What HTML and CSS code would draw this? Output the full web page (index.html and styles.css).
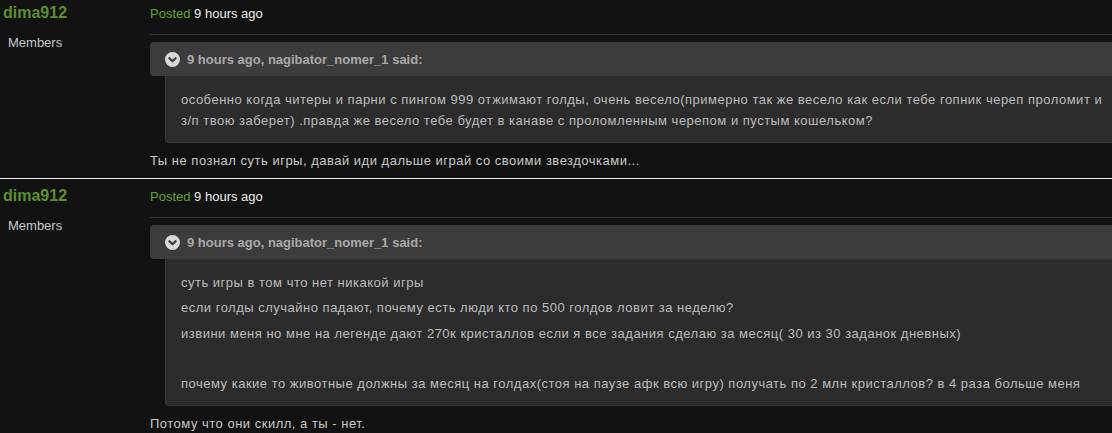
FILE: index.html
```html
<!DOCTYPE html>
<html lang="ru">
<head>
<meta charset="utf-8">
<title>Forum</title>
<link rel="stylesheet" href="styles.css">
</head>
<body>
<div class="thread">
  <article class="post first">
    <aside class="author">
      <div class="name">dima912</div>
      <div class="group">Members</div>
    </aside>
    <div class="main">
      <div class="meta"><span class="posted">Posted</span> 9 hours ago</div>
      <blockquote class="quote">
        <div class="quote-head">
          <svg class="toggle" width="15" height="15" viewBox="0 0 15 15"><circle cx="7.5" cy="7.5" r="7.5" fill="#d9d9d9"/><path d="M4.4 6.2 L7.5 9.2 L10.6 6.2" fill="none" stroke="#3a3a3a" stroke-width="2.2" stroke-linecap="round" stroke-linejoin="round"/></svg>
          <span>9 hours ago, nagibator_nomer_1 said:</span>
        </div>
        <div class="quote-body">
          <p>особенно когда читеры и парни с пингом 999 отжимают голды, очень весело(примерно так же весело как если тебе гопник череп проломит и з/п твою заберет) .правда же весело тебе будет в канаве с проломленным черепом и пустым кошельком?</p>
        </div>
      </blockquote>
      <div class="text">Ты не познал суть игры, давай иди дальше играй со своими звездочками...</div>
    </div>
  </article>
  <article class="post">
    <aside class="author">
      <div class="name">dima912</div>
      <div class="group">Members</div>
    </aside>
    <div class="main">
      <div class="meta"><span class="posted">Posted</span> 9 hours ago</div>
      <blockquote class="quote">
        <div class="quote-head">
          <svg class="toggle" width="15" height="15" viewBox="0 0 15 15"><circle cx="7.5" cy="7.5" r="7.5" fill="#d9d9d9"/><path d="M4.4 6.2 L7.5 9.2 L10.6 6.2" fill="none" stroke="#3a3a3a" stroke-width="2.2" stroke-linecap="round" stroke-linejoin="round"/></svg>
          <span>9 hours ago, nagibator_nomer_1 said:</span>
        </div>
        <div class="quote-body">
          <p>суть игры в том что нет никакой игры</p>
          <p>если голды случайно падают, почему есть люди кто по 500 голдов ловит за неделю?</p>
          <p>извини меня но мне на легенде дают 270к кристаллов если я все задания сделаю за месяц( 30 из 30 заданок дневных)</p>
          <p>&nbsp;</p>
          <p>почему какие то животные должны за месяц на голдах(стоя на паузе афк всю игру) получать по 2 млн кристаллов? в 4 раза больше меня</p>
        </div>
      </blockquote>
      <div class="text">Потому что они скилл, а ты - нет.</div>
    </div>
  </article>
</div>
</body>
</html>
```
FILE: styles.css
```css
html, body {
  margin: 0;
  padding: 0;
  background: #121212;
  overflow: hidden;
}
body {
  font-family: "Liberation Sans", Arial, sans-serif;
  font-size: 13px;
  color: #c8c8c8;
}
.thread {
  width: 1130px;
  margin-top: -4px;
}
.post {
  display: flex;
  border-top: 1px solid #ececec;
  padding-bottom: 7px;
}
.post.first {
  border-top: 0;
}
.author {
  width: 150px;
  flex: none;
  padding-top: 7px;
}
.name {
  font-size: 16px;
  font-weight: bold;
  line-height: 20px;
  color: #5d8f30;
  padding-left: 3px;
}
.group {
  margin-top: 10px;
  padding-left: 8px;
  line-height: 20px;
  color: #c4c8cc;
}
.main {
  flex: 1;
  min-width: 0;
  padding-top: 8px;
}
.meta {
  line-height: 20px;
  padding-bottom: 10px;
  border-bottom: 1px solid #303030;
  color: #ececec;
}
.posted {
  color: #61a52e;
}
.quote {
  margin: 7px 0 0 0;
}
.quote-head {
  height: 34px;
  display: flex;
  align-items: center;
  gap: 7px;
  padding-left: 15px;
  background: #3c3c3c;
  border-radius: 4px 0 0 4px;
  font-weight: bold;
  color: #a9a9a9;
}
.toggle {
  display: block;
  flex: none;
}
.quote-body {
  margin-left: 15px;
  background: #2c2c2c;
  border: 1px solid #3a3a3a;
  border-top: 0;
  border-right: 0;
  border-radius: 0 0 0 4px;
  padding: 13px 15px 11px 15px;
  color: #bcbcbc;
  letter-spacing: 0.5px;
}
.quote-body p {
  margin: 0;
  line-height: 21px;
}
.quote-body p + p {
  margin-top: 4.3px;
}
.text {
  margin-top: 8px;
  line-height: 20px;
  color: #c8c8c8;
  letter-spacing: 0.5px;
}
```
